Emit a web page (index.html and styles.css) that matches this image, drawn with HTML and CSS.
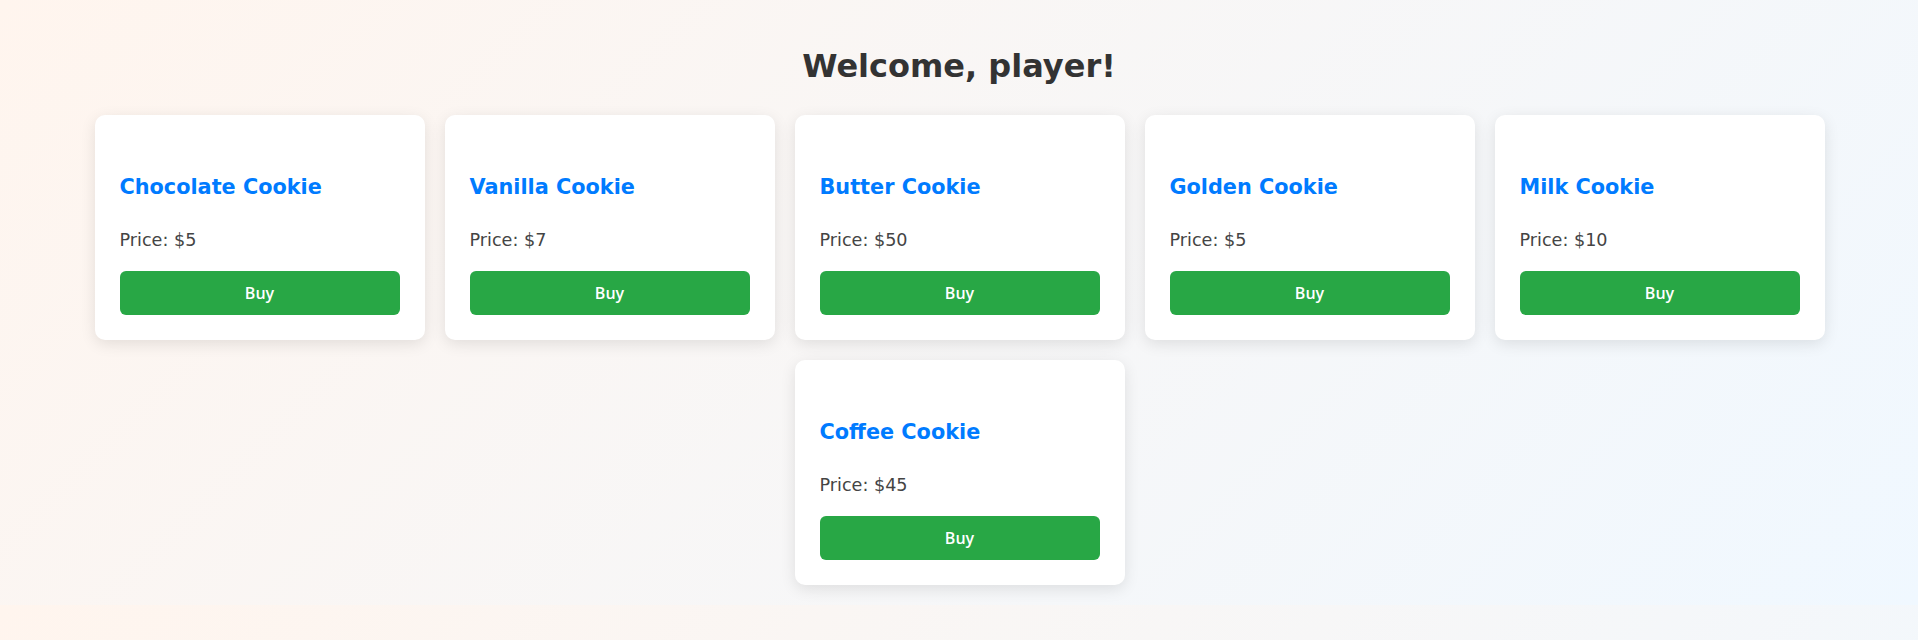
FILE: index.html
```html
<!DOCTYPE html>
<html lang="en">
<head>
<meta charset="utf-8">
<title>Cookie Shop</title>
<link rel="stylesheet" href="styles.css">
</head>
<body>
  <h1 class="welcome">Welcome, player!</h1>
  <div class="shop">
    <div class="card">
      <h3 class="card-title">Chocolate Cookie</h3>
      <p class="card-price">Price: $5</p>
      <button class="buy-btn">Buy</button>
    </div>
    <div class="card">
      <h3 class="card-title">Vanilla Cookie</h3>
      <p class="card-price">Price: $7</p>
      <button class="buy-btn">Buy</button>
    </div>
    <div class="card">
      <h3 class="card-title">Butter Cookie</h3>
      <p class="card-price">Price: $50</p>
      <button class="buy-btn">Buy</button>
    </div>
    <div class="card">
      <h3 class="card-title">Golden Cookie</h3>
      <p class="card-price">Price: $5</p>
      <button class="buy-btn">Buy</button>
    </div>
    <div class="card">
      <h3 class="card-title">Milk Cookie</h3>
      <p class="card-price">Price: $10</p>
      <button class="buy-btn">Buy</button>
    </div>
    <div class="card">
      <h3 class="card-title">Coffee Cookie</h3>
      <p class="card-price">Price: $45</p>
      <button class="buy-btn">Buy</button>
    </div>
  </div>
</body>
</html>
```

FILE: styles.css
```css
html {
  margin: 0;
}

body {
  margin: 0;
  padding: 47px 0 20px;
  font-family: "DejaVu Sans", sans-serif;
  background: linear-gradient(135deg, #fff5ee, #f0f8ff);
}

.welcome {
  margin: 0 0 30px;
  text-align: center;
  font-size: 32px;
  font-weight: bold;
  color: #333333;
}

.shop {
  display: flex;
  flex-wrap: wrap;
  justify-content: center;
  gap: 20px;
  padding-left: 1px;
}

.card {
  box-sizing: border-box;
  width: 330px;
  padding: 26px 25px 25px;
  background: #ffffff;
  border-radius: 10px;
  box-shadow: 0 4px 15px rgba(0, 0, 0, 0.1);
  display: flex;
  flex-direction: column;
}

.card-title {
  margin: 34px 0 31px;
  font-size: 20.8px;
  font-weight: bold;
  color: #007bff;
}

.card-price {
  margin: 0 0 21px;
  font-size: 17.6px;
  color: #444444;
}

.buy-btn {
  height: 44px;
  width: 100%;
  border: none;
  border-radius: 6px;
  background: #28a745;
  color: #ffffff;
  font-family: "Open Sans", sans-serif;
  font-weight: 600;
  font-size: 16px;
  cursor: pointer;
}
```
